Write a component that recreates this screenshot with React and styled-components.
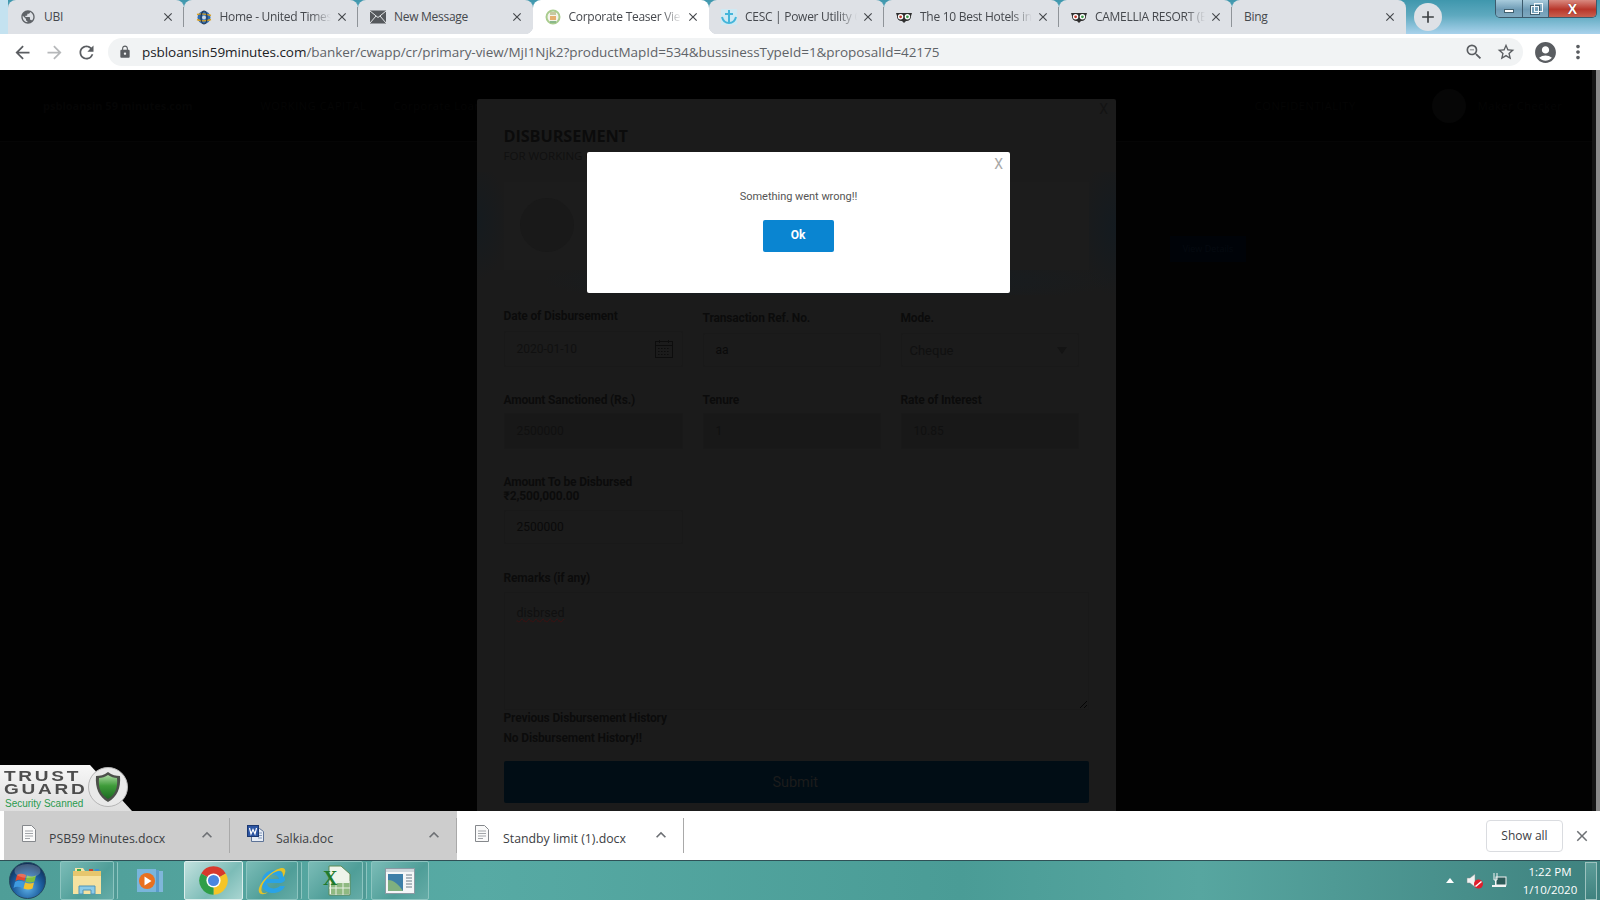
import styled, { createGlobalStyle } from "styled-components";
import {
  MdAccountCircle,
  MdAdd,
  MdArrowBack,
  MdArrowForward,
  MdClose,
  MdExpandLess,
  MdLock,
  MdMoreVert,
  MdPublic,
  MdRefresh,
  MdStarBorder,
  MdZoomOut,
} from "react-icons/md";

const GlobalStyle = createGlobalStyle`
  html, body {
    margin: 0;
    height: 100%;
    overflow: hidden;
    background: #000;
  }
  body {
    font-family: "Open Sans", "Liberation Sans", sans-serif;
  }
  * {
    box-sizing: border-box;
  }
`;

const Screen = styled.div`
  width: 1600px;
  height: 900px;
  display: flex;
  flex-direction: column;
`;

/* browser tabs */
const TabStrip = styled.div`
  height: 34px;
  flex: none;
  display: flex;
  padding-left: 8px;
  background: linear-gradient(90deg, #c4e2f0 0 8px, transparent 8px),
    linear-gradient(180deg, #3f97ad 0, #5ea9bf 45%, #a9d2ec 100%);
`;

const Tab = styled.div`
  position: relative;
  flex: none;
  width: ${(p) => p.$width}px;
  height: 34px;
  display: flex;
  align-items: center;
  padding: 0 8px 0 12px;
  border-radius: 8px 8px 0 0;
  background: ${(p) => (p.$active ? "#fff" : "#dee1e6")};
  z-index: ${(p) => (p.$active ? 1 : 0)};

  ${(p) =>
    p.$divider &&
    `&::after {
      content: "";
      position: absolute;
      right: 0;
      top: 7px;
      height: 20px;
      width: 1px;
      background: #8f9499;
    }`}

  ${(p) =>
    p.$active &&
    `&::before {
      content: "";
      position: absolute;
      left: -8px;
      right: -8px;
      bottom: 0;
      height: 8px;
      z-index: -1;
      background:
        radial-gradient(circle at 0 0, #dee1e6 8px, #fff 8.5px) left bottom / 8px 8px no-repeat,
        radial-gradient(circle at 100% 0, #dee1e6 8px, #fff 8.5px) right bottom / 8px 8px no-repeat;
    }`}
`;

const TabIcon = styled.span`
  flex: none;
  width: 16px;
  height: 16px;
  display: flex;
  align-items: center;
  justify-content: center;
  color: #5f6368;
`;

const TabTitle = styled.span`
  flex: 1;
  min-width: 0;
  margin-left: ${(p) => (p.$bare ? 0 : 8)}px;
  padding-bottom: 2px;
  font-size: 12px;
  letter-spacing: -0.28px;
  color: #45484d;
  white-space: nowrap;
  ${(p) =>
    p.$fade &&
    `-webkit-mask-image: linear-gradient(90deg, #000 82%, transparent 100%);
     mask-image: linear-gradient(90deg, #000 82%, transparent 100%);`}
`;

const TabClose = styled.span`
  flex: none;
  width: 16px;
  height: 16px;
  margin-left: 3px;
  display: flex;
  align-items: center;
  justify-content: center;
  color: #45484c;
  font-size: 14px;
`;

const NewTab = styled.div`
  flex: none;
  width: 28px;
  height: 28px;
  margin: 3px 0 0 8px;
  border-radius: 50%;
  background: #dee1e6;
  color: #3c4043;
  font-size: 20px;
  display: flex;
  align-items: center;
  justify-content: center;
`;

const WindowControls = styled.div`
  margin: 0 3px 0 auto;
  height: 18px;
  display: flex;
  border: 1px solid #3c5a6c;
  border-top: none;
  border-radius: 0 0 5px 5px;
  overflow: hidden;
`;

const WindowButton = styled.div`
  width: ${(p) => p.$width}px;
  display: flex;
  align-items: center;
  justify-content: center;
  border-right: 1px solid #3c5a6c;
  background: ${(p) =>
    p.$close
      ? "linear-gradient(180deg, #d98a80, #b8362a 55%, #c8604f)"
      : "linear-gradient(180deg, #a8cbdc, #6f9cb6 55%, #7fa9c0)"};

  &:last-child {
    border-right: none;
  }
`;

const MinGlyph = styled.span`
  width: 10px;
  height: 4px;
  margin-top: 4px;
  background: #fff;
  border: 1px solid #41606f;
`;

const RestoreGlyph = styled.span`
  position: relative;
  width: 8px;
  height: 8px;
  margin: 2px 0 0 -2px;
  border: 1.5px solid #f4f8fa;
  outline: 1px solid #41606f;

  &::after {
    content: "";
    position: absolute;
    top: -4px;
    left: 2px;
    width: 7px;
    height: 7px;
    border: 1.5px solid #f4f8fa;
  }
`;

const CloseGlyph = styled.span`
  color: #fff;
  font-family: "Liberation Sans", sans-serif;
  font-weight: 700;
  font-size: 14px;
  line-height: 1;
  text-shadow: 0 0 1px #5a1a12;
`;

/* address bar */
const Toolbar = styled.div`
  height: 36px;
  flex: none;
  display: flex;
  align-items: center;
  background: #fff;
  padding-left: 6px;
`;

const NavButton = styled.div`
  flex: none;
  width: 32px;
  display: flex;
  justify-content: center;
  font-size: 21px;
  color: ${(p) => (p.$off ? "#b6b8ba" : "#5a5d61")};
`;

const Omnibox = styled.div`
  flex: none;
  width: 1415px;
  height: 28px;
  margin-left: 6px;
  padding: 0 1px 0 10px;
  border-radius: 14px;
  background: #f1f3f4;
  display: flex;
  align-items: center;
  color: #5f6368;
`;

const LockIcon = styled(MdLock)`
  flex: none;
  font-size: 14px;
  color: #5a5d61;
  margin-right: 10px;
`;

const Url = styled.div`
  flex: 1;
  font-size: 13.5px;
  letter-spacing: -0.06px;
  color: #5f6368;
  white-space: nowrap;

  b {
    font-weight: 400;
    color: #202124;
  }
`;

const OmniIcon = styled.div`
  flex: none;
  width: 32px;
  display: flex;
  justify-content: center;
  font-size: 20px;
  color: #5a5d61;
`;

const ProfileIcon = styled(MdAccountCircle)`
  flex: none;
  margin-left: 10px;
  font-size: 25px;
  color: #5a5d61;
`;

const MenuIcon = styled(MdMoreVert)`
  flex: none;
  margin-left: 9px;
  font-size: 22px;
  color: #5a5d61;
`;

/* the dimmed page */
const Page = styled.div`
  position: relative;
  flex: 1;
  min-height: 0;
  display: flex;
  overflow: hidden;
  background: #020202;
`;

const PageMain = styled.div`
  flex: 1;
  min-width: 0;
`;

const PageHeader = styled.div`
  height: 72px;
  display: flex;
  align-items: center;
  padding: 0 0 0 43px;
  background: #000;
  border-bottom: 1px solid #050505;
  color: #050505;
  font-size: 12px;
  white-space: nowrap;
`;

const HeaderBrand = styled.span`
  font-weight: 700;
  font-size: 11px;
`;

const HeaderLink = styled.span`
  margin-left: ${(p) => p.$gap}px;
  font-size: 11px;
  letter-spacing: 0.6px;
`;

const Avatar = styled.span`
  flex: none;
  width: 34px;
  height: 34px;
  margin-left: ${(p) => p.$gap}px;
  border-radius: 50%;
  background: #060606;
`;

const ViewButton = styled.div`
  width: 76px;
  height: 26px;
  margin: 94px 0 0 1170px;
  background: #000308;
  color: #050a10;
  font-size: 9px;
  text-align: center;
  line-height: 26px;
`;

const Scrollbar = styled.div`
  flex: none;
  width: 8px;
  display: flex;
  background: #141414;

  &::after {
    content: "";
    width: 4px;
    margin-left: auto;
    background: #8a8a8a;
  }
`;

const FormModal = styled.div`
  position: absolute;
  left: 477px;
  top: 29px;
  width: 639px;
  height: 760px;
  padding: 27px 27px 0 26.5px;
  border-radius: 2px 2px 0 0;
  background: #1b1b1b;
  color: #0b0b0b;
`;

const ModalCross = styled.span`
  position: absolute;
  right: 8px;
  top: 2px;
  font-family: Roboto, sans-serif;
  font-size: 14px;
  color: #131313;
`;

const FormTitle = styled.div`
  height: 20px;
  font-size: 16.3px;
  line-height: 20px;
  font-weight: 700;
  letter-spacing: -0.1px;
`;

const FormSubtitle = styled.div`
  height: 14px;
  margin-top: 3px;
  font-size: 11.5px;
  line-height: 14px;
  color: #101010;
`;

const Banner = styled.div`
  margin: 9px -27px 14px -26.5px;
  padding: 10px 27px 25px 26.5px;
  background: radial-gradient(ellipse 30px 60px at 0 40%, #151b1f, transparent),
    radial-gradient(ellipse 40px 70px at 100% 45%, #141b20, transparent),
    radial-gradient(ellipse 45% 22% at 55% 88%, #141e25, transparent);
`;

const BannerCard = styled.div`
  height: 88px;
  display: flex;
  align-items: center;
  padding-left: 16px;
  background: #1c1c1c;
`;

const BannerLogo = styled.div`
  width: 54px;
  height: 54px;
  margin-top: -2px;
  border-radius: 50%;
  background: #191919;
`;

const FormRow = styled.div`
  display: grid;
  grid-template-columns: 179px 178px 178px;
  column-gap: 20px;
  align-items: end;
  margin-bottom: ${(p) => p.$gap || 26}px;
`;

const Field = styled.label`
  display: flex;
  flex-direction: column;
  gap: ${(p) => p.$gap || 8}px;
`;

const FieldLabel = styled.span`
  font-family: Roboto, sans-serif;
  font-size: 12px;
  line-height: 14px;
  font-weight: 700;
  letter-spacing: -0.15px;
  color: #0b0b0b;
`;

const InputBox = styled.div`
  height: ${(p) => p.$height || 34}px;
  display: flex;
  align-items: center;
  justify-content: space-between;
  padding: 0 9px 0 12px;
  border: 1px solid #191919;
  border-radius: 2px;
  background: ${(p) => (p.$disabled ? "#181818" : "#1b1b1b")};
  font-family: Roboto, sans-serif;
  font-size: 12px;
  color: ${(p) => (p.$dark ? "#0a0a0a" : "#101010")};
`;

const SelectValue = styled.span`
  font-size: 13px;
  margin-left: -4px;
`;

const SelectCaret = styled.span`
  width: 0;
  height: 0;
  margin-right: 2px;
  border-left: 5px solid transparent;
  border-right: 5px solid transparent;
  border-top: 7px solid #141414;
`;

const Remarks = styled.div`
  position: relative;
  height: 118px;
  padding: 12px 12px;
  border: 1px solid #191919;
  font-family: Roboto, sans-serif;
  font-size: 12.5px;
  line-height: 16px;
  color: #101010;

  span {
    text-decoration: underline wavy #3a1010 1px;
  }

  svg {
    position: absolute;
    right: 1px;
    bottom: 1px;
  }
`;

const HistoryLine = styled.div`
  margin-top: ${(p) => p.$gap}px;
  font-family: Roboto, sans-serif;
  font-size: 12px;
  line-height: 14px;
  font-weight: 700;
  letter-spacing: -0.15px;
`;

const SubmitButton = styled.div`
  height: 42px;
  margin-top: 16px;
  border-radius: 2px;
  background: #010d15;
  color: #1c1c1c;
  font-family: Roboto, sans-serif;
  font-size: 14.5px;
  line-height: 43px;
  text-align: center;
  padding-right: 2px;
`;

const Dialog = styled.div`
  position: absolute;
  left: 587px;
  top: 82px;
  width: 423px;
  height: 141px;
  padding-top: 38px;
  border-radius: 2px;
  background: #fff;
  display: flex;
  flex-direction: column;
  align-items: center;
`;

const DialogCross = styled.span`
  position: absolute;
  right: 7px;
  top: 4px;
  font-family: Roboto, sans-serif;
  font-size: 14px;
  color: #a8a8a8;
`;

const DialogText = styled.div`
  font-family: Roboto, sans-serif;
  font-size: 11px;
  line-height: 14px;
  letter-spacing: -0.03px;
  color: #555;
`;

const OkButton = styled.div`
  width: 71px;
  height: 32px;
  margin: 16px 1px 0 0;
  border-radius: 2px;
  background: #0a85d1;
  color: #fff;
  font-family: Roboto, sans-serif;
  font-size: 12px;
  font-weight: 700;
  line-height: 31px;
  text-align: center;
`;

/* trust seal sitting on the lower left corner of the page */
const TrustSeal = styled.div`
  position: absolute;
  left: 0;
  bottom: 0;
  width: 132px;
  height: 46px;
`;

const SealPlate = styled.div`
  width: 132px;
  height: 46px;
  padding: 5px 0 0 4px;
  background: linear-gradient(180deg, #f7f7f7, #dedede);
  clip-path: polygon(0 0, 90px 0, 132px 46px, 0 46px);
`;

const SealWord = styled.div`
  height: 13px;
  font-family: "Liberation Sans", sans-serif;
  font-size: 14px;
  line-height: 13px;
  font-weight: 700;
  color: #4d4d4d;
  letter-spacing: 2px;
  white-space: nowrap;
  transform: scaleX(1.36);
  transform-origin: left center;
`;

const SealCaption = styled.div`
  margin: 2px 0 0 1px;
  font-family: "Liberation Sans", sans-serif;
  font-size: 10px;
  line-height: 12px;
  color: #2a9a4e;
  white-space: nowrap;
`;

const SealShield = styled.svg`
  position: absolute;
  left: 87px;
  top: 1px;
`;

/* downloads shelf */
const Shelf = styled.div`
  height: 49px;
  flex: none;
  display: flex;
  align-items: center;
  padding-left: 4px;
  background: #fff;
`;

const DownloadItem = styled.div`
  position: relative;
  flex: none;
  align-self: stretch;
  width: ${(p) => p.$width}px;
  display: flex;
  align-items: center;
  padding-left: ${(p) => p.$inset}px;
  background: ${(p) => (p.$grey ? "#cdcdcd" : "#fff")};

  &::after {
    content: "";
    position: absolute;
    right: 0;
    top: 7px;
    bottom: 7px;
    width: 1px;
    background: #a9a9a9;
  }
`;

const FileIcon = styled.svg`
  flex: none;
  margin-top: -5px;
`;

const FileName = styled.span`
  flex: 1;
  margin-left: ${(p) => p.$gap || 13}px;
  font-size: 12.3px;
  color: #3c4043;
  white-space: nowrap;
  padding-top: 5px;
`;

const ShelfChevron = styled(MdExpandLess)`
  flex: none;
  margin: -2px 13px 0 0;
  font-size: 20px;
  color: #6d7074;
`;

const ShowAll = styled.div`
  flex: none;
  width: 77px;
  height: 32px;
  margin-left: auto;
  border: 1px solid #dadce0;
  border-radius: 4px;
  font-size: 12px;
  line-height: 30px;
  text-align: center;
  color: #3c4043;
`;

const ShelfClose = styled(MdClose)`
  flex: none;
  margin: 0 9px 0 10px;
  font-size: 18px;
  color: #6d7074;
`;

/* windows taskbar */
const Taskbar = styled.div`
  height: 40px;
  flex: none;
  display: flex;
  align-items: stretch;
  padding-left: 9px;
  border-top: 1px solid #2f5056;
  background: linear-gradient(90deg, #4f9e98 0, #57aaa4 30%, #4a9c96 60%, #57a6a0 75%, #3f827f 100%);
`;

const StartOrb = styled.svg`
  flex: none;
  align-self: center;
`;

const TaskButton = styled.div`
  flex: none;
  width: ${(p) => p.$width}px;
  margin-left: ${(p) => p.$gap}px;
  display: flex;
  align-items: center;
  justify-content: center;
  border-radius: 2px;
  ${(p) =>
    p.$kind === "plain"
      ? ""
      : `border: 1px solid ${p.$kind === "active" ? "#dbeeec" : "#8cc5c0"};
         box-shadow: ${p.$stacked ? "4px 0 0 -1px #4f9a95, 5px 0 0 -1px #8cc5c0" : "none"};
         background: ${
           p.$kind === "active"
             ? "linear-gradient(135deg, #c2e1de, #7cbcb7 60%, #a9d5d1)"
             : "linear-gradient(135deg, #7bbcb7, #4f9e98 60%, #66aca7)"
         };`}
`;

const Tray = styled.div`
  flex: none;
  margin-left: auto;
  display: flex;
  align-items: center;
`;

const TrayArrow = styled.span`
  width: 0;
  height: 0;
  border-left: 4px solid transparent;
  border-right: 4px solid transparent;
  border-bottom: 5px solid #fff;
`;

const TrayIcon = styled.svg`
  flex: none;
  margin-left: ${(p) => p.$gap}px;
`;

const Clock = styled.div`
  width: 66px;
  margin-left: 10px;
  padding-top: 1px;
  color: #fff;
  font-size: 11.5px;
  line-height: 18px;
  text-align: center;
`;

const ShowDesktop = styled.div`
  width: 12px;
  height: 38px;
  margin: 0 3px 0 2px;
  border: 1px solid #9cc2be;
  background: linear-gradient(180deg, #5d9d99, #3f827f);
`;

/* small drawings */
const TimesIcon = () => (
  <svg width="17" height="17" viewBox="0 0 16 16">
    <circle cx="8" cy="8" r="6.5" fill="#2f6db3" />
    <path d="M1 5c4-1 8-1 14 1M1 10c4 2 8 2 14 0" stroke="#d9a021" strokeWidth="1.4" fill="none" />
    <ellipse cx="8" cy="8" rx="3" ry="6.5" fill="none" stroke="#23364f" strokeWidth="1.2" />
    <circle cx="8" cy="8" r="2" fill="#c9d8e6" />
  </svg>
);

const MailIcon = () => (
  <svg width="16" height="14" viewBox="0 0 16 14">
    <rect width="16" height="13" y="0.5" fill="#55585c" />
    <path d="M0 1l8 6.5L16 1M0 13l6-7M16 13l-6-7" stroke="#e4e6e8" strokeWidth="1" fill="none" />
  </svg>
);

const EmblemIcon = () => (
  <svg width="16" height="16" viewBox="0 0 16 16">
    <circle cx="8" cy="8" r="6.5" fill="#f4f4ec" stroke="#a9cc8e" strokeWidth="2" />
    <rect x="5" y="3" width="6" height="3" fill="#c7c9a0" />
    <rect x="5" y="7" width="6" height="4" fill="#e5b070" />
    <rect x="5" y="12" width="6" height="2" fill="#8ab88a" />
  </svg>
);

const AnchorIcon = () => (
  <svg width="16" height="16" viewBox="0 0 16 16">
    <rect width="16" height="16" fill="#cfe9f3" />
    <path d="M8 1v13M4 5h8M1 8c1 4 4 6 7 6s6-2 7-6" stroke="#45b5da" strokeWidth="2" fill="none" />
  </svg>
);

const OwlIcon = () => (
  <svg width="16" height="12" viewBox="0 0 16 12">
    <path d="M0 2h16l-1 3a4.5 4.5 0 0 1-5 5l-2 2-2-2a4.5 4.5 0 0 1-5-5z" fill="#2f2f2f" />
    <circle cx="4.6" cy="5.8" r="2.7" fill="#fff" />
    <circle cx="11.4" cy="5.8" r="2.7" fill="#fff" />
    <circle cx="4.6" cy="5.8" r="1.4" fill="#c0392b" />
    <circle cx="11.4" cy="5.8" r="1.4" fill="#3f9c4a" />
  </svg>
);

const DocIcon = () => (
  <FileIcon width="14" height="17" viewBox="0 0 14 17">
    <path d="M.5.5h9l4 4v12H.5z" fill="#fafafa" stroke="#85888c" />
    <path d="M3 6h8M3 8.5h8M3 11h8M3 13.5h5" stroke="#a2a5a9" />
  </FileIcon>
);

const WordIcon = () => (
  <FileIcon width="17" height="17" viewBox="0 0 17 17">
    <path d="M4.5 3.5h8l4 3v10h-12z" fill="#e6ecf5" stroke="#5d7397" />
    <path d="M11 8h4M11 10.5h4M11 13h4" stroke="#8397b8" />
    <rect x="0.5" y="0.5" width="11" height="11" fill="#2c55a3" stroke="#1c3870" />
    <path d="M2.5 3l1.5 6 2-4.5L8 9l1.5-6" stroke="#fff" strokeWidth="1.2" fill="none" />
  </FileIcon>
);

const OrbIcon = () => (
  <StartOrb width="37" height="37" viewBox="0 0 37 37">
    <defs>
      <radialGradient id="orbFill" cx="50%" cy="70%" r="65%">
        <stop offset="0" stopColor="#5db1e8" />
        <stop offset="0.6" stopColor="#1c5d9e" />
        <stop offset="1" stopColor="#0e2f58" />
      </radialGradient>
    </defs>
    <circle cx="18.5" cy="18.5" r="18" fill="url(#orbFill)" stroke="#264a5f" />
    <path d="M8 13c3-2 6-1 9 0l-1.5 6c-3-1-6-2-9 0z" fill="#e0482e" />
    <path d="M18 13.5c3 1 6 1.5 9 0l-1.5 6c-3 1.5-6 1-9 0z" fill="#7fbf3f" />
    <path d="M6 20c3-2 6-1 9 0l-1.5 6c-3-1-6-2-9 0z" fill="#3f9be0" />
    <path d="M16 20.5c3 1 6 1.5 9 0l-1.5 6c-3 1.5-6 1-9 0z" fill="#f2c22e" />
    <ellipse cx="18.5" cy="9" rx="13" ry="7" fill="#fff" opacity="0.22" />
  </StartOrb>
);

const FolderIcon = () => (
  <svg width="32" height="30" viewBox="0 0 32 30">
    <path d="M2 5h28v23H2z" fill="#e7c66d" />
    <path d="M4 2h8l2 3H4z" fill="#f4e3a8" />
    <rect x="6" y="3" width="4" height="2" fill="#3fae4a" />
    <rect x="18" y="3" width="4" height="2" fill="#c8452f" />
    <rect x="24" y="3" width="4" height="2" fill="#3f8fd0" />
    <path d="M2 10h28v18H2z" fill="#f6e2a0" />
    <path d="M8 28v-8h16v8h-4v-4h-8v4z" fill="#8ccbe8" stroke="#4f94b8" />
  </svg>
);

const MediaIcon = () => (
  <svg width="28" height="28" viewBox="0 0 28 28">
    <rect x="9" y="4" width="18" height="21" fill="#7fb6da" />
    <rect x="5" y="3" width="18" height="22" fill="#5a9ccb" />
    <rect x="1" y="2" width="19" height="23" fill="#79b5dc" />
    <circle cx="11" cy="14" r="8" fill="#e9701f" />
    <path d="M8.5 9.5l7 4.5-7 4.5z" fill="#fff" />
  </svg>
);

const ChromeIcon = () => (
  <svg width="31" height="31" viewBox="0 0 24 24">
    <path d="M12 12L2.47 6.5A11 11 0 0 1 21.53 6.5Z" fill="#d8392c" />
    <path d="M12 12L21.53 6.5A11 11 0 0 1 12 23Z" fill="#f5c527" />
    <path d="M12 12L12 23A11 11 0 0 1 2.47 6.5Z" fill="#2f9e47" />
    <circle cx="12" cy="12" r="5.5" fill="#fff" />
    <circle cx="12" cy="12" r="4.3" fill="#4a86e0" />
  </svg>
);

const IeIcon = () => (
  <svg width="32" height="32" viewBox="0 0 32 32">
    <path
      d="M25 18H11c0 6 9 7 13 3h5c-3 7-13 9-19 5S4 13 10 8s17-4 19 6c0 1 0 3-4 4zM11 14h12c-1-6-11-6-12 0z"
      fill="#2aa3e6"
    />
    <path d="M3 27C1 20 14 6 25 3c6-1 5 5 2 9 0-5-1-7-5-6C14 8 3 20 6 27c1 2 4 1 6 0-3 3-8 3-9 0z" fill="#e5c327" />
  </svg>
);

const ExcelIcon = () => (
  <svg width="31" height="31" viewBox="0 0 31 31">
    <path d="M9 1h12l9 8v21H9z" fill="#eef4ea" stroke="#5d8a55" />
    <path d="M11 18h18v11H11z" fill="#6fa55e" opacity="0.75" />
    <path d="M9 17h21M9 23h21M16 17v13M23 17v13" stroke="#e8f1e4" />
    <text x="3" y="20" fontFamily="Liberation Serif, serif" fontWeight="700" fontSize="20" fill="#1f7a2c">
      X
    </text>
  </svg>
);

const PanelIcon = () => (
  <svg width="30" height="26" viewBox="0 0 30 26">
    <rect x="0.5" y="0.5" width="29" height="25" fill="#f4f6f7" stroke="#8a9aa3" />
    <rect x="1" y="1" width="28" height="3" fill="#cfd7dc" />
    <rect x="3" y="6" width="15" height="17" fill="#3d7fa8" />
    <path d="M3 23V12c6 0 10 4 15 11z" fill="#7fb07f" />
    <path d="M21 7h6M21 10h6M21 13h6M21 16h6M21 19h6" stroke="#6b7c87" />
  </svg>
);

const Tabs = [
  { title: "UBI", width: 175.5, icon: <MdPublic size={18} />, divider: true },
  { title: "Home - United Times", width: 174.5, icon: <TimesIcon />, divider: true, fade: true },
  { title: "New Message", width: 174.5, icon: <MailIcon /> },
  { title: "Corporate Teaser Vie", width: 176.5, icon: <EmblemIcon />, active: true, fade: true },
  { title: "CESC | Power Utility C", width: 175, icon: <AnchorIcon />, divider: true, fade: true },
  { title: "The 10 Best Hotels in", width: 175, icon: <OwlIcon />, divider: true, fade: true },
  { title: "CAMELLIA RESORT (E", width: 173, icon: <OwlIcon />, divider: true, fade: true },
  { title: "Bing", width: 174, icon: null },
];

function App() {
  return (
    <>
      <GlobalStyle />
      <Screen>
        <TabStrip>
          {Tabs.map((tab) => (
            <Tab key={tab.title} $width={tab.width} $active={tab.active} $divider={tab.divider}>
              {tab.icon && <TabIcon>{tab.icon}</TabIcon>}
              <TabTitle $fade={tab.fade} $bare={!tab.icon}>
                {tab.title}
              </TabTitle>
              <TabClose>
                <MdClose />
              </TabClose>
            </Tab>
          ))}
          <NewTab>
            <MdAdd />
          </NewTab>
          <WindowControls>
            <WindowButton $width={27}>
              <MinGlyph />
            </WindowButton>
            <WindowButton $width={26}>
              <RestoreGlyph />
            </WindowButton>
            <WindowButton $width={47} $close>
              <CloseGlyph>X</CloseGlyph>
            </WindowButton>
          </WindowControls>
        </TabStrip>

        <Toolbar>
          <NavButton>
            <MdArrowBack />
          </NavButton>
          <NavButton $off>
            <MdArrowForward />
          </NavButton>
          <NavButton>
            <MdRefresh />
          </NavButton>
          <Omnibox>
            <LockIcon />
            <Url>
              <b>psbloansin59minutes.com</b>/banker/cwapp/cr/primary-view/MjI1Njk2?productMapId=534&amp;bussinessTypeId=1&amp;proposalId=42175
            </Url>
            <OmniIcon>
              <MdZoomOut />
            </OmniIcon>
            <OmniIcon>
              <MdStarBorder />
            </OmniIcon>
          </Omnibox>
          <ProfileIcon />
          <MenuIcon />
        </Toolbar>

        <Page>
          <PageMain>
            <PageHeader>
              <HeaderBrand>psbloansin 59 minutes.com</HeaderBrand>
              <HeaderLink $gap={68}>WORKING CAPITAL</HeaderLink>
              <HeaderLink $gap={27}>Corporate Loans</HeaderLink>
              <HeaderLink $gap={767}>CONFIDENTIALITY</HeaderLink>
              <Avatar $gap={76} />
              <HeaderLink $gap={12}>Maker Checker</HeaderLink>
            </PageHeader>
            <ViewButton>View Details</ViewButton>
          </PageMain>
          <Scrollbar />

          <FormModal>
            <ModalCross>X</ModalCross>
            <FormTitle>DISBURSEMENT</FormTitle>
            <FormSubtitle>FOR WORKING CAPITAL</FormSubtitle>
            <Banner>
              <BannerCard>
                <BannerLogo />
              </BannerCard>
            </Banner>

            <FormRow>
              <Field>
                <FieldLabel>Date of Disbursement</FieldLabel>
                <InputBox $height={36}>
                  2020-01-10
                  <svg width="18" height="18" viewBox="0 0 18 18" fill="none" stroke="#0d0d0d">
                    <rect x="0.5" y="1.5" width="17" height="16" />
                    <path d="M0 5.5h18M4.5 0v3M13.5 0v3" />
                    <path d="M3 8.5h12M3 11.5h12M3 14.5h12" strokeDasharray="1.5 1.5" />
                  </svg>
                </InputBox>
              </Field>
              <Field>
                <FieldLabel>Transaction Ref. No.</FieldLabel>
                <InputBox $dark>aa</InputBox>
              </Field>
              <Field>
                <FieldLabel>Mode.</FieldLabel>
                <InputBox>
                  <SelectValue>Cheque</SelectValue>
                  <SelectCaret />
                </InputBox>
              </Field>
            </FormRow>

            <FormRow>
              <Field $gap={6}>
                <FieldLabel>Amount Sanctioned (Rs.)</FieldLabel>
                <InputBox $height={36} $disabled>
                  2500000
                </InputBox>
              </Field>
              <Field $gap={6}>
                <FieldLabel>Tenure</FieldLabel>
                <InputBox $height={36} $disabled>
                  1
                </InputBox>
              </Field>
              <Field $gap={6}>
                <FieldLabel>Rate of Interest</FieldLabel>
                <InputBox $height={36} $disabled>
                  10.85
                </InputBox>
              </Field>
            </FormRow>

            <FormRow $gap={27}>
              <Field $gap={7}>
                <FieldLabel>
                  Amount To be Disbursed
                  <br />
                  ₹2,500,000.00
                </FieldLabel>
                <InputBox $dark>2500000</InputBox>
              </Field>
            </FormRow>

            <Field $gap={7}>
              <FieldLabel>Remarks (if any)</FieldLabel>
              <Remarks>
                <span>disbrsed</span>
                <svg width="8" height="8" viewBox="0 0 8 8" stroke="#050505">
                  <path d="M1 8l7-7M5 8l3-3" />
                </svg>
              </Remarks>
            </Field>

            <HistoryLine $gap={1}>Previous Disbursement History</HistoryLine>
            <HistoryLine $gap={6}>No Disbursement History!!</HistoryLine>
            <SubmitButton>Submit</SubmitButton>
          </FormModal>

          <Dialog>
            <DialogCross>X</DialogCross>
            <DialogText>Something went wrong!!</DialogText>
            <OkButton>Ok</OkButton>
          </Dialog>

          <TrustSeal>
            <SealPlate>
              <SealWord>TRUST</SealWord>
              <SealWord>GUARD</SealWord>
              <SealCaption>Security Scanned</SealCaption>
            </SealPlate>
            <SealShield width="42" height="42" viewBox="0 0 42 42">
              <defs>
                <linearGradient id="shieldFill" x1="0" y1="0" x2="0" y2="1">
                  <stop offset="0" stopColor="#a9d8a0" />
                  <stop offset="0.45" stopColor="#3f9b3a" />
                  <stop offset="1" stopColor="#1c6b22" />
                </linearGradient>
              </defs>
              <circle cx="21" cy="21" r="19.5" fill="#e9e9e9" stroke="#b5b5b5" />
              <path d="M21 6c4 3 8 4 12 4 1 12-3 21-12 26C12 31 8 22 9 10c4 0 8-1 12-4z" fill="#4c4f4a" />
              <path d="M21 9c3 2 6 3 9 3 1 10-2 17-9 21-7-4-10-11-9-21 3 0 6-1 9-3z" fill="url(#shieldFill)" />
            </SealShield>
          </TrustSeal>
        </Page>

        <Shelf>
          <DownloadItem $grey $width={226} $inset={18}>
            <DocIcon />
            <FileName>PSB59 Minutes.docx</FileName>
            <ShelfChevron />
          </DownloadItem>
          <DownloadItem $grey $width={227} $inset={17}>
            <WordIcon />
            <FileName $gap={12}>Salkia.doc</FileName>
            <ShelfChevron />
          </DownloadItem>
          <DownloadItem $width={227} $inset={18}>
            <DocIcon />
            <FileName $gap={14}>Standby limit (1).docx</FileName>
            <ShelfChevron />
          </DownloadItem>
          <ShowAll>Show all</ShowAll>
          <ShelfClose />
        </Shelf>

        <Taskbar>
          <OrbIcon />
          <TaskButton $width={54} $gap={14} $stacked>
            <FolderIcon />
          </TaskButton>
          <TaskButton $width={61} $gap={5} $kind="plain">
            <MediaIcon />
          </TaskButton>
          <TaskButton $width={59} $gap={4} $kind="active">
            <ChromeIcon />
          </TaskButton>
          <TaskButton $width={52} $gap={3} $stacked>
            <IeIcon />
          </TaskButton>
          <TaskButton $width={55} $gap={10} $stacked>
            <ExcelIcon />
          </TaskButton>
          <TaskButton $width={58} $gap={8}>
            <PanelIcon />
          </TaskButton>
          <Tray>
            <TrayArrow />
            <TrayIcon $gap={12} width="17" height="17" viewBox="0 0 17 17">
              <path d="M1 6h3l5-4v13l-5-4H1z" fill="#f2f2f2" stroke="#7b8b8a" strokeWidth="0.5" />
              <circle cx="12.5" cy="12" r="4.5" fill="#e01f2d" />
              <path d="M9.5 14.5l6-5" stroke="#fff" strokeWidth="1.5" />
            </TrayIcon>
            <TrayIcon $gap={8} width="16" height="17" viewBox="0 0 16 17">
              <rect x="5" y="5" width="10" height="8" fill="#2d5a58" stroke="#f4f4f4" />
              <path d="M1 14h14" stroke="#f4f4f4" strokeWidth="2" />
              <path d="M3 1v7h3V1M4.5 8v6" stroke="#f4f4f4" fill="none" />
            </TrayIcon>
            <Clock>
              1:22 PM
              <br />
              1/10/2020
            </Clock>
            <ShowDesktop />
          </Tray>
        </Taskbar>
      </Screen>
    </>
  );
}

export default App;
